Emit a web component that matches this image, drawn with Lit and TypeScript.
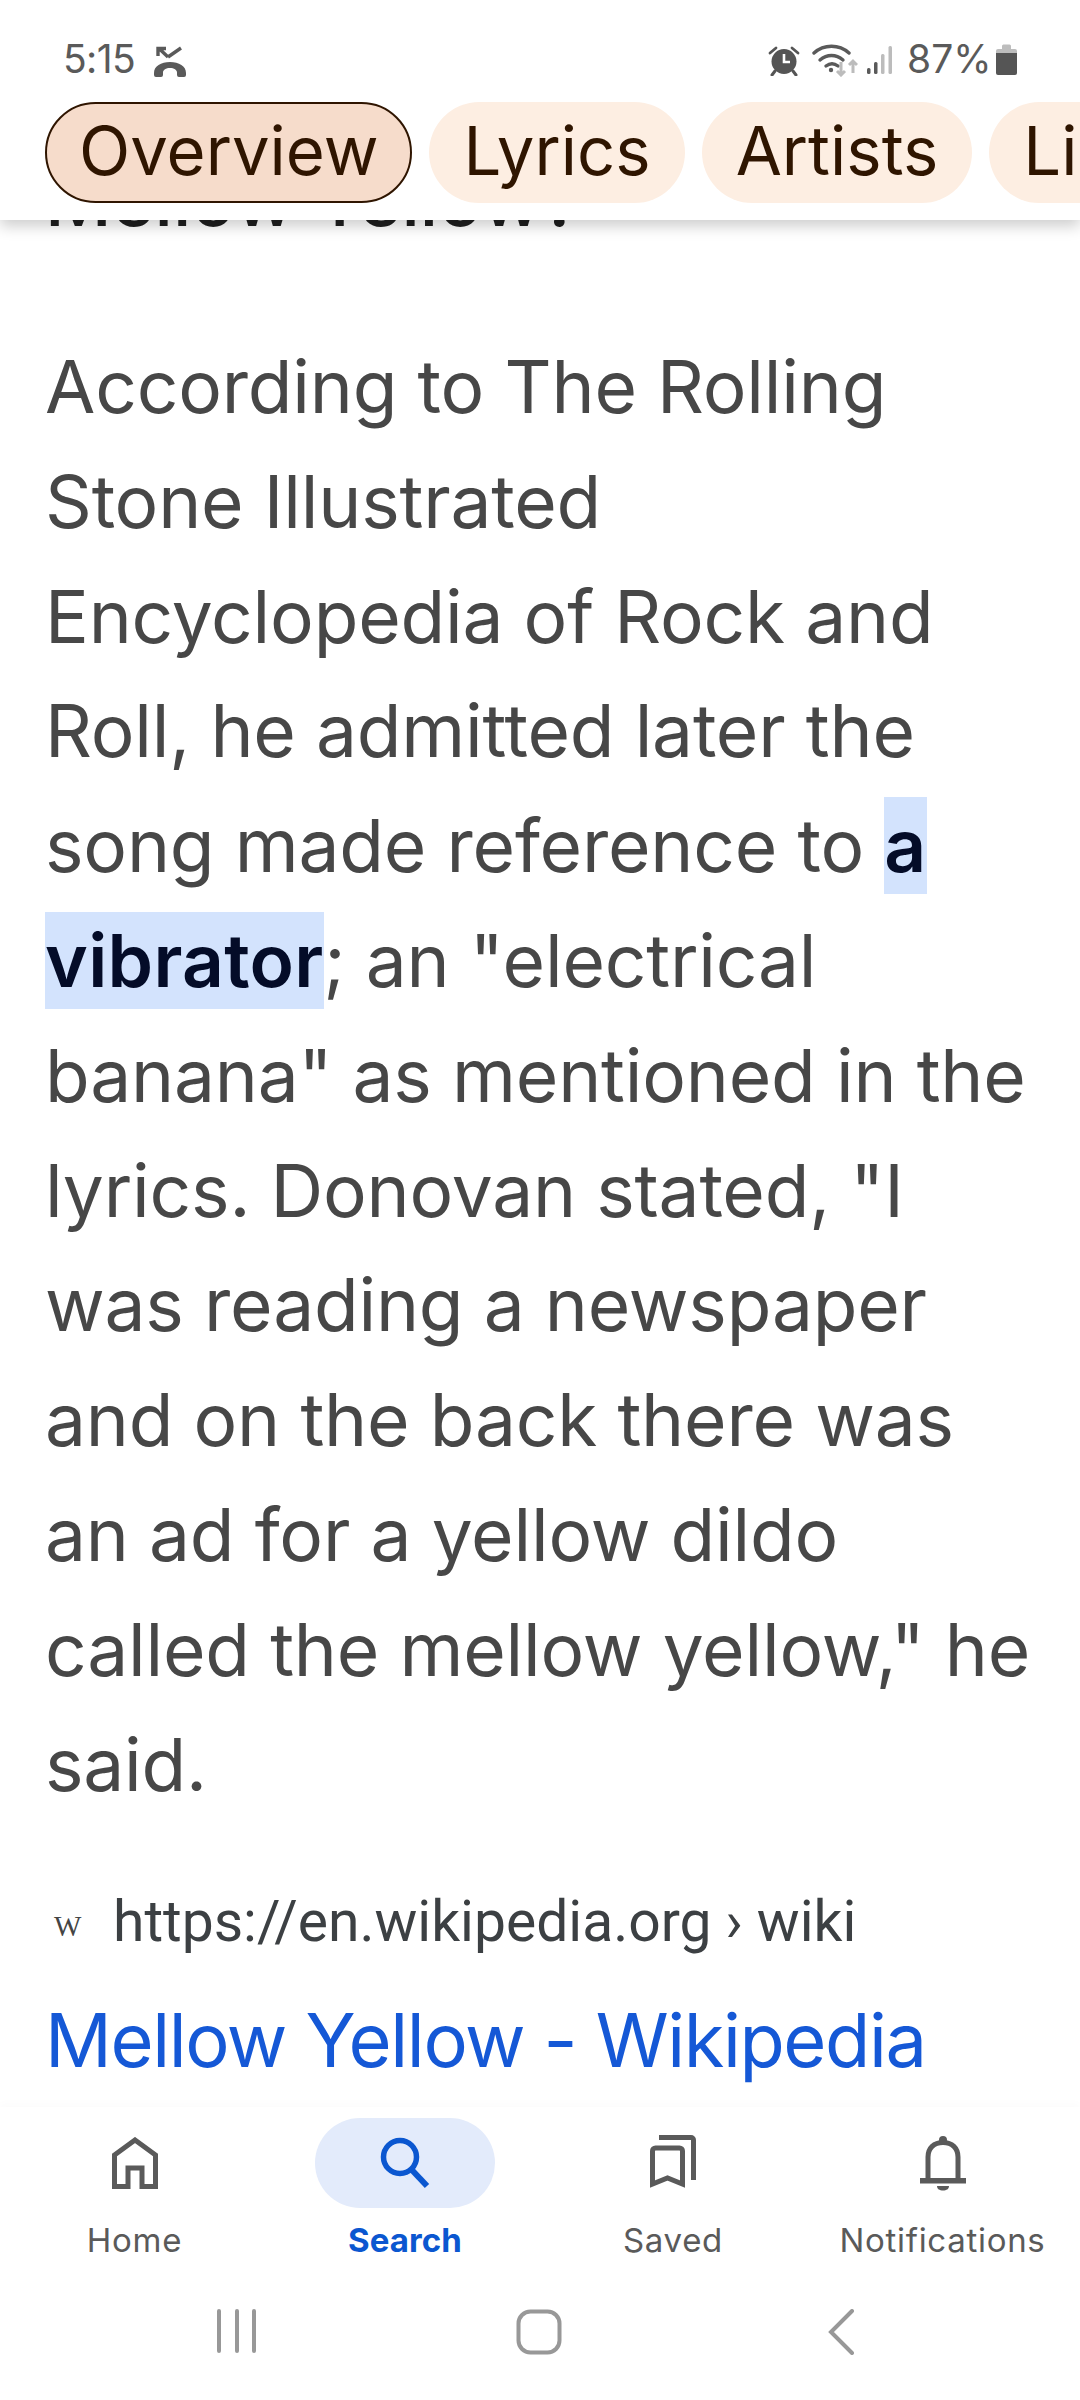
import { LitElement, html, css } from "lit";
import { customElement } from "lit/decorators.js";

const BODY = [
  html`According to The Rolling`,
  html`Stone Illustrated`,
  html`Encyclopedia of Rock and`,
  html`Roll, he admitted later the`,
  html`song made reference to <mark>a</mark>`,
  html`<mark>vibrator</mark>; an "electrical`,
  html`banana" as mentioned in the`,
  html`lyrics. Donovan stated, "I`,
  html`was reading a newspaper`,
  html`and on the back there was`,
  html`an ad for a yellow dildo`,
  html`called the mellow yellow," he`,
  html`said.`,
];

@customElement("app-root")
export class AppRoot extends LitElement {
  static styles = css`
    :host { display: block; width: 1080px; height: 2400px; background: #fff; overflow: hidden; font-family: Inter, Roboto, sans-serif; }
    .page { width: 1080px; height: 2400px; display: flex; flex-direction: column; }
    header { height: 220px; flex: none; background: #fff; box-shadow: 0 6px 14px rgba(0,0,0,.2); position: relative; z-index: 2; overflow: hidden; }
    .status { height: 102px; display: flex; align-items: flex-start; padding: 40px 0 0 63px; box-sizing: border-box; color: #5a5a5a; font-size: 39px; line-height: 38px; }
    .status svg { display: block; flex: none; }
    .time { width: 90px; letter-spacing: -.6px; }
    .spacer { flex: 1; }
    .rt { display: flex; align-items: flex-start; }
    .chips { display: flex; gap: 17px; padding-left: 45px; white-space: nowrap; }
    .chip { height: 101px; box-sizing: border-box; border-radius: 51px; background: #fdeee2; color: #2f1500; font-size: 67px; line-height: 97px; padding: 0 34px; flex: none; }
    .chip.on { background: #f6dccb; border: 2px solid #2f1500; padding: 0 32px; line-height: 93px; }
    main { flex: 1; overflow: hidden; position: relative; min-height: 0; }
    h2 { margin: -70px 0 0 45px; font-size: 73px; line-height: 100px; font-weight: 500; color: #1f1f1f; white-space: nowrap; }
    .body { margin: 80px 0 0 45px; color: #474747; font-size: 73px; letter-spacing: -.2px; line-height: 114.8px; white-space: nowrap; }
    mark { background: #d3e3fd; color: #040c28; font-weight: 600; letter-spacing: .3px; padding: 4px 0; }
    .src { display: flex; align-items: center; margin: 66px 0 0 45px; color: #3c4043; font-size: 57px; line-height: 60px; font-family: Roboto, sans-serif; }
    .fav { width: 68px; font-family: "Liberation Serif", serif; font-size: 29px; color: #444; padding: 8px 0 0 9px; box-sizing: border-box; }
    .title { margin: 39px 0 0 45px; font-size: 74px; letter-spacing: -1.4px; line-height: 90px; color: #1558d6; white-space: nowrap; }
    nav { height: 190px; flex: none; display: grid; grid-template-columns: 269px 272px 264px 275px; background: #fff; box-shadow: 0 -4px 8px rgba(0,0,0,.015); position: relative; z-index: 2; }
    .item { display: flex; flex-direction: column; align-items: center; color: #5a5a5a; font-size: 33px; letter-spacing: .7px; }
    .ico { height: 90px; margin-top: 11px; width: 180px; border-radius: 45px; display: flex; align-items: center; justify-content: center; }
    .item.on { color: #0b57d0; font-weight: 700; letter-spacing: .1px; }
    .item.on .ico { background: #e3ebfb; }
    .lab { margin-top: 12px; line-height: 40px; white-space: nowrap; }
    .gest { height: 103px; flex: none; display: grid; grid-template-columns: 474px 130px 476px; align-items: start; background: #fff; position: relative; z-index: 2; }
    .gest div { display: flex; justify-content: center; padding-top: 12px; }
  `;

  render() {
    return html`<div class="page">
      <header>
        <div class="status">
          <span class="time">5:15</span>
          <svg width="34" height="32" viewBox="0 0 34 32" style="margin-top:6px"><g fill="none" stroke="#5a5a5a" stroke-width="3.4"><path d="M6 2.500l9 8.500M5 10V2.500h8M15 11l13-9"/></g><path d="M1 27c0-7 7-11 16-11s16 4 16 11v2a2 2 0 0 1-2 2h-5a2 2 0 0 1-2-2v-2.500c0-2.500-3-4.500-7-4.500s-7 2-7 4.500V29a2 2 0 0 1-2 2H3a2 2 0 0 1-2-2z" fill="#5a5a5a"/></svg>
          <span class="spacer"></span>
          <div class="rt">
            <svg width="32" height="30" viewBox="0 0 32 30" style="margin-top:6px"><circle cx="16" cy="15.500" r="12.500" fill="#555"/><path d="M16 8v8h6" fill="none" stroke="#fff" stroke-width="2.600"/><path d="M2 7l6-5M30 7l-6-5" stroke="#555" stroke-width="2.800" stroke-linecap="round"/><path d="M7 25l-3 4M25 25l3 4" stroke="#555" stroke-width="3" stroke-linecap="round"/></svg>
            <svg width="46" height="34" viewBox="0 0 46 34" style="margin:3px 0 0 12px"><g fill="none" stroke="#5a5a5a" stroke-width="3.400" stroke-linecap="round"><path d="M2 10c10-9 25-9 35 0"/><path d="M8 17c7-6 16-6 23 0"/><path d="M14 23c4-3 8-3 12 0"/></g><circle cx="19" cy="27" r="2.200" fill="#5a5a5a"/><g fill="none" stroke="#bcbcbc" stroke-width="3"><path d="M29 19v13M25 28l4 4 4-4M41 30V18M37 22l4-4 4 4"/></g></svg>
            <svg width="26" height="30" viewBox="0 0 26 30" style="margin:5px 0 0 9px"><rect x="0" y="23" width="3.500" height="6" rx="1.500" fill="#5a5a5a"/><rect x="7" y="17" width="3.500" height="12" rx="1.500" fill="#5a5a5a"/><rect x="14" y="9" width="3.500" height="20" rx="1.500" fill="#bcbcbc"/><rect x="21.500" y="1" width="3.500" height="28" rx="1.500" fill="#bcbcbc"/></svg>
            <span style="margin-left:14px;width:89px;">87%</span>
            <svg width="21" height="31" viewBox="0 0 21 31" style="margin:4px 63px 0 0"><path d="M6 5V2a1.500 1.500 0 0 1 1.500-1.500h6A1.500 1.500 0 0 1 15 2v3h4a2 2 0 0 1 2 2v4H0V7a2 2 0 0 1 2-2z" fill="#bdbdbd"/><path d="M0 9h21v20a2 2 0 0 1-2 2H2a2 2 0 0 1-2-2z" fill="#555"/></svg>
          </div>
        </div>
        <div class="chips">
          <span class="chip on">Overview</span>
          <span class="chip">Lyrics</span>
          <span class="chip">Artists</span>
          <span class="chip">Listen</span>
        </div>
      </header>
      <main>
        <h2>Mellow Yellow?</h2>
        <div class="body">${BODY.map((l) => html`<div>${l}</div>`)}</div>
        <div class="src"><span class="fav">W</span><span>https://en.wikipedia.org › wiki</span></div>
        <div class="title">Mellow Yellow - Wikipedia</div>
      </main>
      <nav>
        <div class="item"><div class="ico"><svg width="46" height="52" viewBox="0 0 46 52"><path d="M2.500 49.500V18L23 3l20.500 15v31.500H30V31H16v18.500z" fill="none" stroke="#5a5a5a" stroke-width="5"/></svg></div><span class="lab">Home</span></div>
        <div class="item on"><div class="ico"><svg width="50" height="52" viewBox="0 0 50 52"><circle cx="20" cy="20" r="16.500" fill="none" stroke="#0b57d0" stroke-width="5.500"/><path d="M31 32l16 17" stroke="#0b57d0" stroke-width="6"/></svg></div><span class="lab">Search</span></div>
        <div class="item"><div class="ico"><svg width="46" height="56" viewBox="0 0 46 56"><path d="M9 2.500h32a2.500 2.500 0 0 1 2.500 2.500v40" fill="none" stroke="#5a5a5a" stroke-width="5"/><path d="M2.500 49V16a3 3 0 0 1 3-3h24a3 3 0 0 1 3 3v33L17.500 43z" fill="none" stroke="#5a5a5a" stroke-width="5"/></svg></div><span class="lab">Saved</span></div>
        <div class="item"><div class="ico"><svg width="46" height="56" viewBox="0 0 46 56"><path d="M8 44V22C8 13 14 7.500 23 7.500S38 13 38 22v22" fill="none" stroke="#5a5a5a" stroke-width="5"/><circle cx="23" cy="5" r="4" fill="#5a5a5a"/><rect x="0" y="43" width="46" height="5.500" fill="#5a5a5a"/><path d="M17 51h12c0 3-2.500 4.500-6 4.500S17 54 17 51z" fill="#5a5a5a"/></svg></div><span class="lab">Notifications</span></div>
      </nav>
      <div class="gest">
        <div><svg width="42" height="44" viewBox="0 0 42 44"><path d="M3 2v40M21 2v40M38 2v40" stroke="#989898" stroke-width="4" stroke-linecap="round"/></svg></div>
        <div><svg width="46" height="46" viewBox="0 0 46 46"><rect x="2.500" y="2.500" width="41" height="41" rx="12" fill="none" stroke="#989898" stroke-width="4"/></svg></div>
        <div><svg width="28" height="46" viewBox="0 0 28 46"><path d="M24 2L3 23l21 21" fill="none" stroke="#989898" stroke-width="4" stroke-linecap="round"/></svg></div>
      </div>
    </div>`;
  }
}
